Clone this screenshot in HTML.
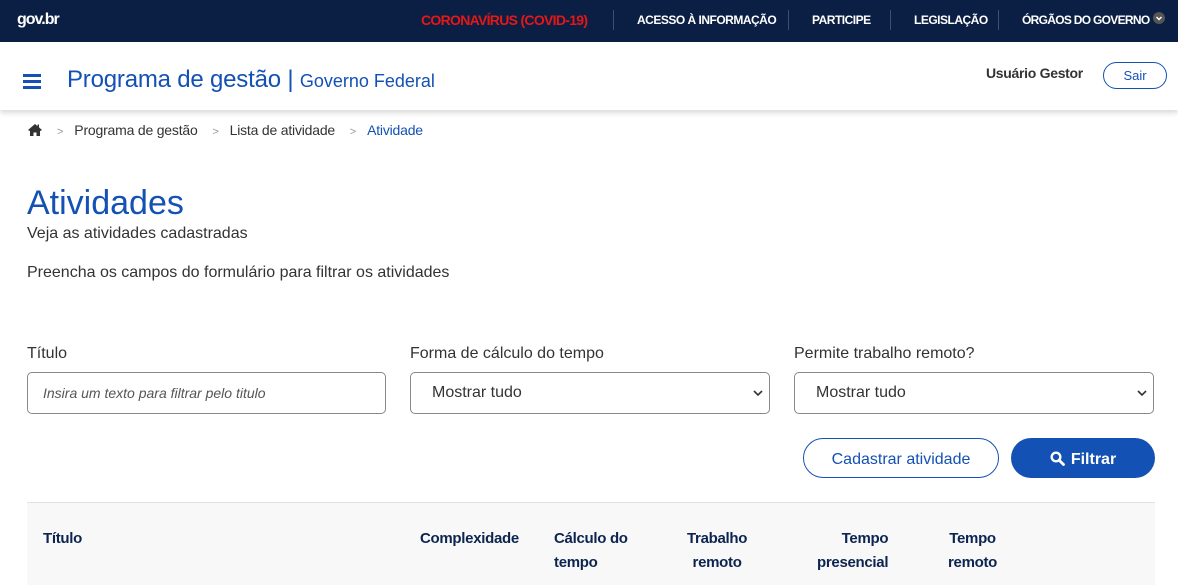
<!DOCTYPE html>
<html><head><meta charset="utf-8"><style>
*{box-sizing:border-box;margin:0;padding:0}
body{width:1178px;height:585px;overflow:hidden;background:#fff;font-family:"Liberation Sans",sans-serif;color:#333;position:relative}
.top{position:absolute;left:0;top:0;width:1178px;height:42px;background:#0b1f45;color:#fff}
.top span{position:absolute;top:13px;font-size:12px;font-weight:bold;letter-spacing:-0.5px}
.sep{position:absolute;top:10px;width:1px;height:20px;background:#3d4f70}
.hdr{position:absolute;left:0;top:42px;width:1178px;height:68px;background:#fff;box-shadow:0 3px 5px rgba(0,0,0,0.15)}
.abs{position:absolute;white-space:nowrap}
.blue{color:#1351b4}
.inp{position:absolute;top:372px;height:42px;border:1px solid #888;border-radius:5px;background:#fff;font-size:16px;padding:11px 21px;color:#333}
.lbl{position:absolute;top:345px;font-size:16px;color:#333}
.chev{position:absolute;right:6px;top:16px}
.th{position:absolute;font-size:15px;font-weight:bold;color:#0c2450;line-height:24px;letter-spacing:-0.3px}
</style></head><body>
<div class="top">
<span style="left:17px;top:11px;font-size:16px;letter-spacing:-1px">gov.br</span>
<span style="left:421px;color:#e61717;font-size:14px;top:12px;letter-spacing:-0.7px">CORONAVÍRUS (COVID-19)</span>
<div class="sep" style="left:613px"></div>
<span style="left:637px">ACESSO À INFORMAÇÃO</span>
<div class="sep" style="left:788px"></div>
<span style="left:812px">PARTICIPE</span>
<div class="sep" style="left:890px"></div>
<span style="left:914px">LEGISLAÇÃO</span>
<div class="sep" style="left:998px"></div>
<span style="left:1022px;letter-spacing:-0.7px">ÓRGÃOS DO GOVERNO</span>
<div style="position:absolute;left:1153px;top:12px;width:12px;height:12px;border-radius:6px;background:#555"><svg width="12" height="12" style="position:absolute;left:0;top:0"><path d="M3.5 5 L6 7.5 L8.5 5" stroke="#fff" stroke-width="1.5" fill="none"/></svg></div>
</div>
<div class="hdr">
<div style="position:absolute;left:23px;top:38px;width:18px;height:3px;background:#1351b4;box-shadow:0 -6px 0 #1351b4,0 6px 0 #1351b4"></div>
<div class="abs blue" style="left:67px;top:24px;font-size:24px;letter-spacing:-0.2px">Programa de gestão <span>|</span> <span style="font-size:18px;letter-spacing:0">Governo Federal</span></div>
<div class="abs" style="left:986px;top:23px;font-size:14px;font-weight:bold;color:#333;letter-spacing:-0.3px">Usuário Gestor</div>
<div class="abs blue" style="left:1103px;top:20px;width:64px;height:27px;border:1px solid #1351b4;border-radius:14px;font-size:13px;text-align:center;line-height:25px">Sair</div>
</div>
<svg class="abs" style="left:27px;top:123px" width="16" height="14" viewBox="0 0 16 14"><path d="M8 1 L1 7 L2.5 8 L3 7.6 V13 H6.5 V9.5 H9.5 V13 H13 V7.6 L13.5 8 L15 7 L12 4.4 V1.5 H10.5 V3.2 Z" fill="#333"/></svg>
<div class="abs" style="left:57px;top:122px;font-size:14px;color:#333;letter-spacing:-0.2px"><span style="color:#999;font-size:11px">&gt;</span>&nbsp;&nbsp;&nbsp;Programa de gestão&nbsp;&nbsp;&nbsp;&nbsp;<span style="color:#999;font-size:11px">&gt;</span>&nbsp;&nbsp;&nbsp;Lista de atividade&nbsp;&nbsp;&nbsp;&nbsp;<span style="color:#999;font-size:11px">&gt;</span>&nbsp;&nbsp;&nbsp;<span class="blue">Atividade</span></div>
<div class="abs blue" style="left:27px;top:184px;font-size:34px">Atividades</div>
<div class="abs" style="left:27px;top:225px;font-size:16px">Veja as atividades cadastradas</div>
<div class="abs" style="left:27px;top:264px;font-size:16px">Preencha os campos do formulário para filtrar os atividades</div>
<div class="lbl" style="left:27px">Título</div>
<div class="lbl" style="left:410px">Forma de cálculo do tempo</div>
<div class="lbl" style="left:794px">Permite trabalho remoto?</div>
<div class="inp" style="left:27px;width:359px;font-style:italic;font-size:14px;color:#555;padding-left:15px;padding-top:12px">Insira um texto para filtrar pelo titulo</div>
<div class="inp" style="left:410px;width:360px">Mostrar tudo<svg class="chev" width="10" height="8"><path d="M1 2 L5 6 L9 2" stroke="#333" stroke-width="1.6" fill="none"/></svg></div>
<div class="inp" style="left:794px;width:360px">Mostrar tudo<svg class="chev" width="10" height="8"><path d="M1 2 L5 6 L9 2" stroke="#333" stroke-width="1.6" fill="none"/></svg></div>
<div class="abs blue" style="left:803px;top:438px;width:196px;height:40px;border:1px solid #1351b4;border-radius:20px;font-size:16px;text-align:center;line-height:41px">Cadastrar atividade</div>
<div class="abs" style="left:1011px;top:438px;width:144px;height:40px;background:#1351b4;border-radius:20px;color:#fff;font-size:16px;font-weight:bold;text-align:center;line-height:43px"><svg width="15" height="15" viewBox="0 0 15 15" style="vertical-align:-2px;margin-right:6px"><circle cx="6" cy="6" r="4.3" stroke="#fff" stroke-width="2.4" fill="none"/><path d="M9.2 9.2 L13.5 13.5" stroke="#fff" stroke-width="2.8" stroke-linecap="round"/></svg>Filtrar</div>
<div class="abs" style="left:27px;top:502px;width:1128px;height:83px;background:#f8f8f8;border-top:1px solid #e2e2e2"></div>
<div class="th" style="left:43px;top:527px">Título</div>
<div class="th" style="left:420px;top:527px">Complexidade</div>
<div class="th" style="left:554px;top:527px">Cálculo do<br>tempo</div>
<div class="th" style="left:687px;top:527px;text-align:center">Trabalho<br>remoto</div>
<div class="th" style="left:817px;top:527px;text-align:right">Tempo<br>presencial</div>
<div class="th" style="left:948px;top:527px;text-align:center">Tempo<br>remoto</div>
</body></html>
